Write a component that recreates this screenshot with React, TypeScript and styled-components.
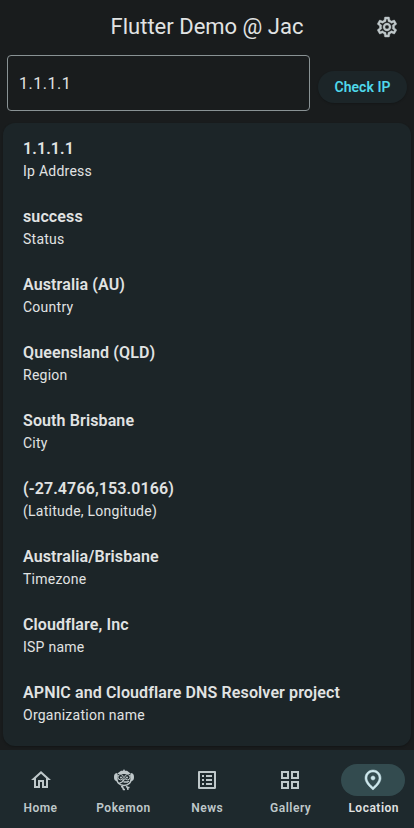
import React from "react";
import styled, { createGlobalStyle } from "styled-components";
import {
  MdOutlineGridView,
  MdOutlineHome,
  MdOutlineListAlt,
  MdOutlinePlace,
  MdOutlineSettings,
} from "react-icons/md";

const GlobalStyle = createGlobalStyle`
  * { box-sizing: border-box; }
  body { margin: 0; background: #191c1d; font-family: Roboto, sans-serif; color: #e1e3e3; }
  button, input { font-family: inherit; }
`;

const Screen = styled.div`
  display: flex;
  flex-direction: column;
  height: 828px;
  overflow: hidden;
`;

const AppBar = styled.header`
  display: grid;
  grid-template-columns: 48px 1fr 48px;
  align-items: center;
  height: 55px;
  padding: 0 3px 2px;
  flex: none;
`;

const Title = styled.h1`
  grid-column: 2;
  margin: 0;
  text-align: center;
  font-size: 22px;
  line-height: 28px;
  font-weight: 400;
`;

const IconButton = styled.button`
  display: flex;
  justify-content: center;
  padding: 0;
  border: 0;
  background: none;
  color: #bfc8ca;
`;

const SettingsIcon = styled(MdOutlineSettings)`
  stroke-width: 0.4px;

  path[fill="none"] {
    stroke: none;
  }
`;

const PlaceIcon = styled(MdOutlinePlace)`
  stroke-width: 0.5px;

  path[fill="none"],
  circle {
    stroke: none;
  }
`;

const SearchRow = styled.form`
  display: flex;
  align-items: center;
  gap: 8px;
  height: 56px;
  padding: 0 7px;
  flex: none;
`;

const AddressInput = styled.input`
  flex: 1;
  min-width: 0;
  height: 56px;
  padding: 0 11px;
  border: 1px solid #899294;
  border-radius: 4px;
  background: transparent;
  color: #e1e3e3;
  font-size: 16px;
  letter-spacing: 0.5px;
  outline: none;
`;

const CheckButton = styled.button`
  width: 89px;
  height: 32px;
  margin-top: 8px;
  padding: 0;
  border: 0;
  border-radius: 16px;
  background: #1c2528;
  box-shadow: 0 1px 2px rgba(0, 0, 0, 0.2);
  color: #4fd8eb;
  font-size: 14px;
  font-weight: 600;
  letter-spacing: 0.05px;
`;

const Card = styled.dl`
  flex: none;
  height: 623px;
  margin: 12px 3px 4px;
  padding: 8px 20px;
  border-radius: 12px;
  background: #1c2528;
  box-shadow: 0 1px 2px rgba(0, 0, 0, 0.25);
`;

const Entry = styled.div`
  display: flex;
  flex-direction: column;
  height: 68px;
  padding-top: 6px;
`;

const Value = styled.dt`
  font-size: 16px;
  line-height: 24px;
  font-weight: 600;
  letter-spacing: 0.12px;
`;

const Label = styled.dd`
  margin: 0;
  font-size: 14px;
  line-height: 20px;
  letter-spacing: 0.25px;
`;

const NavBar = styled.nav`
  display: grid;
  grid-template-columns: repeat(5, 83px);
  justify-content: center;
  flex: 1;
  background: #1e292d;
`;

const Destination = styled.a<{ $active?: boolean }>`
  display: flex;
  flex-direction: column;
  align-items: center;
  padding-top: 14px;
  gap: 4px;
  color: ${(p) => (p.$active ? "#e1e3e3" : "#bfc8ca")};
  font-size: 12px;
  line-height: 16px;
  font-weight: 600;
  letter-spacing: 0.5px;
`;

const DestinationLabel = styled.span<{ $shift: number }>`
  margin-left: ${(p) => p.$shift * 2}px;
`;

const Indicator = styled.span<{ $active?: boolean }>`
  display: flex;
  align-items: center;
  justify-content: center;
  width: 64px;
  height: 32px;
  border-radius: 16px;
  background: ${(p) => (p.$active ? "#334b4f" : "transparent")};
  color: ${(p) => (p.$active ? "#cde7ec" : "#bfc8ca")};
`;

function CreatureIcon() {
  return (
    <svg width="24" height="24" viewBox="0 0 24 24" fill="none" stroke="currentColor">
      <path d="M6 5 9 2.800h2L12 1l1 1.800h2L18 5v1H6Z" fill="currentColor" stroke="none" />
      <path d="M5.500 5C3 5 2 6.500 2 9s.7 4 3 4.200ZM18.500 5C21 5 22 6.500 22 9s-.7 4-3 4.200Z" fill="currentColor" stroke="none" />
      <path d="M5.200 6.500C4.300 10 4.500 13 6.500 15.300c3 3 8 3 11 0 2-2.300 2.200-5.300 1.300-8.800" strokeWidth="1.500" />
      <circle cx="8.600" cy="9.200" r="2.700" strokeWidth="1" />
      <circle cx="15.400" cy="9.200" r="2.700" strokeWidth="1" />
      <circle cx="9" cy="9.500" r="1" fill="currentColor" stroke="none" />
      <circle cx="15" cy="9.500" r="1" fill="currentColor" stroke="none" />
      <path d="m7 15.300 3-1.300 2.500-3M11.500 14h4l1.500-1" strokeWidth="1.300" />
      <path d="M9 18.800h1.500l1 2.700h1.500M14 18.300l1.500 1 .5 2.500M16 19.500h1.500" strokeWidth="1.600" />
    </svg>
  );
}

const entries = [
  ["1.1.1.1", "Ip Address"],
  ["success", "Status"],
  ["Australia (AU)", "Country"],
  ["Queensland (QLD)", "Region"],
  ["South Brisbane", "City"],
  ["(-27.4766,153.0166)", "(Latitude, Longitude)"],
  ["Australia/Brisbane", "Timezone"],
  ["Cloudflare, Inc", "ISP name"],
  ["APNIC and Cloudflare DNS Resolver project", "Organization name"],
];

const destinations = [
  { name: "Home", icon: <MdOutlineHome size={24} />, shift: -0.5 },
  { name: "Pokemon", icon: <CreatureIcon />, shift: -0.5 },
  { name: "News", icon: <MdOutlineListAlt size={24} />, shift: 0.3 },
  { name: "Gallery", icon: <MdOutlineGridView size={24} />, shift: 0.7 },
  { name: "Location", icon: <PlaceIcon size={24} />, shift: 0.7, active: true },
];

export default function App() {
  return (
    <>
      <GlobalStyle />
      <Screen>
        <AppBar>
          <Title>Flutter Demo @ Jac</Title>
          <IconButton aria-label="Settings">
            <SettingsIcon size={24} />
          </IconButton>
        </AppBar>
        <SearchRow>
          <AddressInput defaultValue="1.1.1.1" aria-label="IP address" />
          <CheckButton type="button">Check IP</CheckButton>
        </SearchRow>
        <Card>
          {entries.map(([value, label]) => (
            <Entry key={label}>
              <Value>{value}</Value>
              <Label>{label}</Label>
            </Entry>
          ))}
        </Card>
        <NavBar>
          {destinations.map(({ name, icon, shift, active }) => (
            <Destination key={name} $active={active}>
              <Indicator $active={active}>{icon}</Indicator>
              <DestinationLabel $shift={shift}>{name}</DestinationLabel>
            </Destination>
          ))}
        </NavBar>
      </Screen>
    </>
  );
}
